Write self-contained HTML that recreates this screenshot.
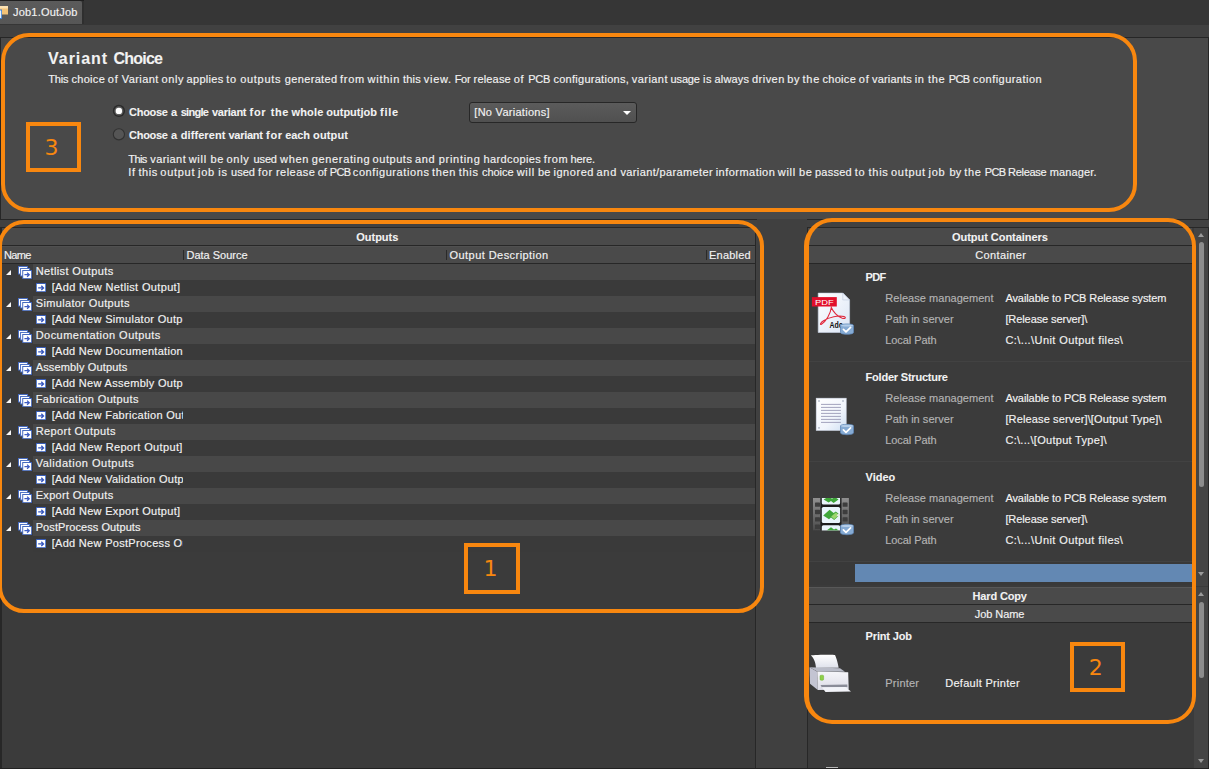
<!DOCTYPE html><html><head><meta charset="utf-8"><title>Job1.OutJob</title><style>
*{margin:0;padding:0;box-sizing:border-box}
html,body{width:1209px;height:769px;overflow:hidden;background:#414141}
body{position:relative;font-family:"Liberation Sans",sans-serif;font-size:11px;color:#f2f2f2}
.a{position:absolute}
.ln{position:absolute;left:0;top:0;width:0;height:0}
.t{position:absolute;white-space:pre;-webkit-text-stroke:.16px;line-height:13px;height:13px;letter-spacing:.3px}
.b{font-weight:bold;letter-spacing:0;-webkit-text-stroke:.08px}
.g{color:#b4b4b4}
.ob{position:absolute;border:4.7px solid #f8870f;border-radius:30px}
.row{position:absolute;left:33px;width:722px;height:16px}
.nb{font-family:"DejaVu Sans","Liberation Sans",sans-serif;font-size:22px;text-align:center}
.hl{position:absolute;height:1px;background:#272727}
</style></head><body>
<div class="a" style="left:0;top:0;width:1209px;height:25px;background:#363636"></div>
<div class="a" style="left:0;top:0;width:84px;height:1px;background:#1f1f1f"></div>
<div class="a" style="left:82px;top:1px;width:2px;height:23px;background:#2f2f2f"></div>
<div class="a" style="left:0;top:1px;width:82px;height:23px;background:linear-gradient(#5b5b5b,#565656);border-radius:0 2px 0 0"></div>
<svg class="a" style="left:0;top:5px" width="9" height="15" viewBox="0 0 9 15"><rect x="0" y="1" width="8" height="8.5" fill="#f3c377"/><rect x="0" y="1" width="8" height="2.5" fill="#fbe2b4"/><rect x="0" y="4.5" width="2" height="9.5" fill="#3f7fd0"/><rect x="0" y="5.5" width="1.2" height="7.5" fill="#e6f2ff"/></svg>
<div class="a" style="left:0;top:37px;width:1209px;height:183px;background:#494949;border:1px solid #262626"></div>
<svg class="a" style="left:111px;top:103px" width="16" height="40" viewBox="0 0 16 40"><circle cx="7.9" cy="7.9" r="6.1" fill="#2b2b2b"/><circle cx="7.9" cy="7.9" r="4.6" fill="#5e5e5e"/><circle cx="7.9" cy="7.9" r="3.2" fill="#fff"/><circle cx="7.9" cy="31.3" r="5.6" fill="#555" stroke="#313131" stroke-width="1.1"/></svg>
<div class="a" style="left:469px;top:102px;width:168px;height:21px;border:1px solid #272727;border-radius:3px;background:linear-gradient(#5b5b5b,#505050)"></div>
<div class="a" style="left:622.5px;top:110.5px;width:0;height:0;border-left:4.5px solid transparent;border-right:4.5px solid transparent;border-top:4.5px solid #fff"></div>
<div class="a" style="left:0;top:227px;width:756px;height:542px;background:#3b3b3b;border:1px solid #272727;border-left-width:2px"></div>
<div class="a" style="left:2px;top:228px;width:753px;height:17px;background:#4a4a4a"></div>
<div class="hl" style="left:2px;top:245px;width:753px"></div>
<div class="a" style="left:2px;top:246px;width:753px;height:17px;background:#4a4a4a;border-top:1px solid #505050"></div>
<div class="hl" style="left:2px;top:263px;width:753px"></div>
<div class="a" style="left:183px;top:250px;width:1px;height:10px;background:#2a2a2a"></div>
<div class="a" style="left:446px;top:250px;width:1px;height:10px;background:#2a2a2a"></div>
<div class="a" style="left:706px;top:250px;width:1px;height:10px;background:#2a2a2a"></div>
<div class="row" style="top:264px;background:#484848"></div>
<div class="row" style="top:280px;background:#3a3a3a"></div>
<div class="a" style="left:6px;top:270.0px;width:0;height:0;border-left:5.2px solid transparent;border-bottom:5.2px solid #f6f6f6"></div>
<svg class="a" style="left:18px;top:266px" width="14.2" height="13.2" viewBox="0 0 15 14"><rect x="0.5" y="0.5" width="9.6" height="8" fill="#fff" stroke="#456bc2"/><rect x="2.7" y="2.6" width="9.6" height="8" fill="#fff" stroke="#456bc2"/><rect x="5" y="4.8" width="9.5" height="8.7" fill="#fff" stroke="#3c62bb"/><path d="M6.8 9.2h5M9.6 7l2.3 2.2-2.3 2.2" fill="none" stroke="#3d5cc2" stroke-width="1.35"/></svg>
<svg class="a" style="left:36px;top:282.6px" width="10" height="9.4" viewBox="0 0 10 9.4"><rect x="0" y="0" width="10" height="9.4" fill="#fff"/><rect x="0.5" y="0.5" width="9" height="8.4" fill="none" stroke="#5a80d0" stroke-width="1"/><rect x="0" y="0" width="10" height="1" fill="#3a5db5"/><rect x="0" y="8.4" width="10" height="1" fill="#3a5db5"/><path d="M2.2 4.9h5.3M5.3 2.8l2.2 2.1-2.2 2.1" fill="none" stroke="#3556bf" stroke-width="1.35"/></svg>
<div class="row" style="top:296px;background:#484848"></div>
<div class="row" style="top:312px;background:#3a3a3a"></div>
<div class="a" style="left:6px;top:302.0px;width:0;height:0;border-left:5.2px solid transparent;border-bottom:5.2px solid #f6f6f6"></div>
<svg class="a" style="left:18px;top:298px" width="14.2" height="13.2" viewBox="0 0 15 14"><rect x="0.5" y="0.5" width="9.6" height="8" fill="#fff" stroke="#456bc2"/><rect x="2.7" y="2.6" width="9.6" height="8" fill="#fff" stroke="#456bc2"/><rect x="5" y="4.8" width="9.5" height="8.7" fill="#fff" stroke="#3c62bb"/><path d="M6.8 9.2h5M9.6 7l2.3 2.2-2.3 2.2" fill="none" stroke="#3d5cc2" stroke-width="1.35"/></svg>
<svg class="a" style="left:36px;top:314.6px" width="10" height="9.4" viewBox="0 0 10 9.4"><rect x="0" y="0" width="10" height="9.4" fill="#fff"/><rect x="0.5" y="0.5" width="9" height="8.4" fill="none" stroke="#5a80d0" stroke-width="1"/><rect x="0" y="0" width="10" height="1" fill="#3a5db5"/><rect x="0" y="8.4" width="10" height="1" fill="#3a5db5"/><path d="M2.2 4.9h5.3M5.3 2.8l2.2 2.1-2.2 2.1" fill="none" stroke="#3556bf" stroke-width="1.35"/></svg>
<div class="row" style="top:328px;background:#484848"></div>
<div class="row" style="top:344px;background:#3a3a3a"></div>
<div class="a" style="left:6px;top:334.0px;width:0;height:0;border-left:5.2px solid transparent;border-bottom:5.2px solid #f6f6f6"></div>
<svg class="a" style="left:18px;top:330px" width="14.2" height="13.2" viewBox="0 0 15 14"><rect x="0.5" y="0.5" width="9.6" height="8" fill="#fff" stroke="#456bc2"/><rect x="2.7" y="2.6" width="9.6" height="8" fill="#fff" stroke="#456bc2"/><rect x="5" y="4.8" width="9.5" height="8.7" fill="#fff" stroke="#3c62bb"/><path d="M6.8 9.2h5M9.6 7l2.3 2.2-2.3 2.2" fill="none" stroke="#3d5cc2" stroke-width="1.35"/></svg>
<svg class="a" style="left:36px;top:346.6px" width="10" height="9.4" viewBox="0 0 10 9.4"><rect x="0" y="0" width="10" height="9.4" fill="#fff"/><rect x="0.5" y="0.5" width="9" height="8.4" fill="none" stroke="#5a80d0" stroke-width="1"/><rect x="0" y="0" width="10" height="1" fill="#3a5db5"/><rect x="0" y="8.4" width="10" height="1" fill="#3a5db5"/><path d="M2.2 4.9h5.3M5.3 2.8l2.2 2.1-2.2 2.1" fill="none" stroke="#3556bf" stroke-width="1.35"/></svg>
<div class="row" style="top:360px;background:#484848"></div>
<div class="row" style="top:376px;background:#3a3a3a"></div>
<div class="a" style="left:6px;top:366.0px;width:0;height:0;border-left:5.2px solid transparent;border-bottom:5.2px solid #f6f6f6"></div>
<svg class="a" style="left:18px;top:362px" width="14.2" height="13.2" viewBox="0 0 15 14"><rect x="0.5" y="0.5" width="9.6" height="8" fill="#fff" stroke="#456bc2"/><rect x="2.7" y="2.6" width="9.6" height="8" fill="#fff" stroke="#456bc2"/><rect x="5" y="4.8" width="9.5" height="8.7" fill="#fff" stroke="#3c62bb"/><path d="M6.8 9.2h5M9.6 7l2.3 2.2-2.3 2.2" fill="none" stroke="#3d5cc2" stroke-width="1.35"/></svg>
<svg class="a" style="left:36px;top:378.6px" width="10" height="9.4" viewBox="0 0 10 9.4"><rect x="0" y="0" width="10" height="9.4" fill="#fff"/><rect x="0.5" y="0.5" width="9" height="8.4" fill="none" stroke="#5a80d0" stroke-width="1"/><rect x="0" y="0" width="10" height="1" fill="#3a5db5"/><rect x="0" y="8.4" width="10" height="1" fill="#3a5db5"/><path d="M2.2 4.9h5.3M5.3 2.8l2.2 2.1-2.2 2.1" fill="none" stroke="#3556bf" stroke-width="1.35"/></svg>
<div class="row" style="top:392px;background:#484848"></div>
<div class="row" style="top:408px;background:#3a3a3a"></div>
<div class="a" style="left:6px;top:398.0px;width:0;height:0;border-left:5.2px solid transparent;border-bottom:5.2px solid #f6f6f6"></div>
<svg class="a" style="left:18px;top:394px" width="14.2" height="13.2" viewBox="0 0 15 14"><rect x="0.5" y="0.5" width="9.6" height="8" fill="#fff" stroke="#456bc2"/><rect x="2.7" y="2.6" width="9.6" height="8" fill="#fff" stroke="#456bc2"/><rect x="5" y="4.8" width="9.5" height="8.7" fill="#fff" stroke="#3c62bb"/><path d="M6.8 9.2h5M9.6 7l2.3 2.2-2.3 2.2" fill="none" stroke="#3d5cc2" stroke-width="1.35"/></svg>
<svg class="a" style="left:36px;top:410.6px" width="10" height="9.4" viewBox="0 0 10 9.4"><rect x="0" y="0" width="10" height="9.4" fill="#fff"/><rect x="0.5" y="0.5" width="9" height="8.4" fill="none" stroke="#5a80d0" stroke-width="1"/><rect x="0" y="0" width="10" height="1" fill="#3a5db5"/><rect x="0" y="8.4" width="10" height="1" fill="#3a5db5"/><path d="M2.2 4.9h5.3M5.3 2.8l2.2 2.1-2.2 2.1" fill="none" stroke="#3556bf" stroke-width="1.35"/></svg>
<div class="row" style="top:424px;background:#484848"></div>
<div class="row" style="top:440px;background:#3a3a3a"></div>
<div class="a" style="left:6px;top:430.0px;width:0;height:0;border-left:5.2px solid transparent;border-bottom:5.2px solid #f6f6f6"></div>
<svg class="a" style="left:18px;top:426px" width="14.2" height="13.2" viewBox="0 0 15 14"><rect x="0.5" y="0.5" width="9.6" height="8" fill="#fff" stroke="#456bc2"/><rect x="2.7" y="2.6" width="9.6" height="8" fill="#fff" stroke="#456bc2"/><rect x="5" y="4.8" width="9.5" height="8.7" fill="#fff" stroke="#3c62bb"/><path d="M6.8 9.2h5M9.6 7l2.3 2.2-2.3 2.2" fill="none" stroke="#3d5cc2" stroke-width="1.35"/></svg>
<svg class="a" style="left:36px;top:442.6px" width="10" height="9.4" viewBox="0 0 10 9.4"><rect x="0" y="0" width="10" height="9.4" fill="#fff"/><rect x="0.5" y="0.5" width="9" height="8.4" fill="none" stroke="#5a80d0" stroke-width="1"/><rect x="0" y="0" width="10" height="1" fill="#3a5db5"/><rect x="0" y="8.4" width="10" height="1" fill="#3a5db5"/><path d="M2.2 4.9h5.3M5.3 2.8l2.2 2.1-2.2 2.1" fill="none" stroke="#3556bf" stroke-width="1.35"/></svg>
<div class="row" style="top:456px;background:#484848"></div>
<div class="row" style="top:472px;background:#3a3a3a"></div>
<div class="a" style="left:6px;top:462.0px;width:0;height:0;border-left:5.2px solid transparent;border-bottom:5.2px solid #f6f6f6"></div>
<svg class="a" style="left:18px;top:458px" width="14.2" height="13.2" viewBox="0 0 15 14"><rect x="0.5" y="0.5" width="9.6" height="8" fill="#fff" stroke="#456bc2"/><rect x="2.7" y="2.6" width="9.6" height="8" fill="#fff" stroke="#456bc2"/><rect x="5" y="4.8" width="9.5" height="8.7" fill="#fff" stroke="#3c62bb"/><path d="M6.8 9.2h5M9.6 7l2.3 2.2-2.3 2.2" fill="none" stroke="#3d5cc2" stroke-width="1.35"/></svg>
<svg class="a" style="left:36px;top:474.6px" width="10" height="9.4" viewBox="0 0 10 9.4"><rect x="0" y="0" width="10" height="9.4" fill="#fff"/><rect x="0.5" y="0.5" width="9" height="8.4" fill="none" stroke="#5a80d0" stroke-width="1"/><rect x="0" y="0" width="10" height="1" fill="#3a5db5"/><rect x="0" y="8.4" width="10" height="1" fill="#3a5db5"/><path d="M2.2 4.9h5.3M5.3 2.8l2.2 2.1-2.2 2.1" fill="none" stroke="#3556bf" stroke-width="1.35"/></svg>
<div class="row" style="top:488px;background:#484848"></div>
<div class="row" style="top:504px;background:#3a3a3a"></div>
<div class="a" style="left:6px;top:494.0px;width:0;height:0;border-left:5.2px solid transparent;border-bottom:5.2px solid #f6f6f6"></div>
<svg class="a" style="left:18px;top:490px" width="14.2" height="13.2" viewBox="0 0 15 14"><rect x="0.5" y="0.5" width="9.6" height="8" fill="#fff" stroke="#456bc2"/><rect x="2.7" y="2.6" width="9.6" height="8" fill="#fff" stroke="#456bc2"/><rect x="5" y="4.8" width="9.5" height="8.7" fill="#fff" stroke="#3c62bb"/><path d="M6.8 9.2h5M9.6 7l2.3 2.2-2.3 2.2" fill="none" stroke="#3d5cc2" stroke-width="1.35"/></svg>
<svg class="a" style="left:36px;top:506.6px" width="10" height="9.4" viewBox="0 0 10 9.4"><rect x="0" y="0" width="10" height="9.4" fill="#fff"/><rect x="0.5" y="0.5" width="9" height="8.4" fill="none" stroke="#5a80d0" stroke-width="1"/><rect x="0" y="0" width="10" height="1" fill="#3a5db5"/><rect x="0" y="8.4" width="10" height="1" fill="#3a5db5"/><path d="M2.2 4.9h5.3M5.3 2.8l2.2 2.1-2.2 2.1" fill="none" stroke="#3556bf" stroke-width="1.35"/></svg>
<div class="row" style="top:520px;background:#484848"></div>
<div class="row" style="top:536px;background:#3a3a3a"></div>
<div class="a" style="left:6px;top:526.0px;width:0;height:0;border-left:5.2px solid transparent;border-bottom:5.2px solid #f6f6f6"></div>
<svg class="a" style="left:18px;top:522px" width="14.2" height="13.2" viewBox="0 0 15 14"><rect x="0.5" y="0.5" width="9.6" height="8" fill="#fff" stroke="#456bc2"/><rect x="2.7" y="2.6" width="9.6" height="8" fill="#fff" stroke="#456bc2"/><rect x="5" y="4.8" width="9.5" height="8.7" fill="#fff" stroke="#3c62bb"/><path d="M6.8 9.2h5M9.6 7l2.3 2.2-2.3 2.2" fill="none" stroke="#3d5cc2" stroke-width="1.35"/></svg>
<svg class="a" style="left:36px;top:538.6px" width="10" height="9.4" viewBox="0 0 10 9.4"><rect x="0" y="0" width="10" height="9.4" fill="#fff"/><rect x="0.5" y="0.5" width="9" height="8.4" fill="none" stroke="#5a80d0" stroke-width="1"/><rect x="0" y="0" width="10" height="1" fill="#3a5db5"/><rect x="0" y="8.4" width="10" height="1" fill="#3a5db5"/><path d="M2.2 4.9h5.3M5.3 2.8l2.2 2.1-2.2 2.1" fill="none" stroke="#3556bf" stroke-width="1.35"/></svg>
<div class="a" style="left:757px;top:219px;width:50px;height:550px;background:#404040"></div>
<div class="a" style="left:807px;top:227px;width:402px;height:542px;background:#3b3b3b;border:1px solid #272727"></div>
<div class="a" style="left:808px;top:228px;width:384px;height:17px;background:#4a4a4a"></div>
<div class="a" style="left:808px;top:246px;width:384px;height:17px;background:#4a4a4a"></div>
<div class="a" style="left:808px;top:588px;width:384px;height:17px;background:#4a4a4a"></div>
<div class="a" style="left:808px;top:605px;width:384px;height:17px;background:#4a4a4a"></div>
<div class="hl" style="left:808px;top:245px;width:384px"></div>
<div class="hl" style="left:808px;top:263px;width:384px"></div>
<div class="hl" style="left:808px;top:604px;width:384px"></div>
<div class="hl" style="left:808px;top:622px;width:384px"></div>
<div class="hl" style="left:808px;top:587px;width:384px;background:#585858"></div>
<div class="hl" style="left:808px;top:361px;width:384px;background:#424242"></div>
<div class="hl" style="left:808px;top:461px;width:384px;background:#424242"></div>
<div class="hl" style="left:808px;top:561px;width:384px;background:#424242"></div>
<div class="a" style="left:826px;top:767px;width:12px;height:1px;background:#b8b8b8"></div>
<div class="a" style="left:808px;top:562px;width:384px;height:23px;background:#393939"></div>
<div class="a" style="left:855px;top:564px;width:337px;height:18px;background:#6388b3"></div>
<div class="a" style="left:1194px;top:228px;width:14px;height:358px;background:#444"></div>
<div class="a" style="left:1194px;top:587px;width:14px;height:181px;background:#444"></div>
<div class="a" style="left:1198.5px;top:242px;width:5px;height:245px;border-radius:3px;background:#8c8c8c"></div>
<div class="a" style="left:1198.5px;top:602px;width:5px;height:76px;border-radius:3px;background:#8c8c8c"></div>
<div class="a" style="left:1197.5px;top:233px;width:0;height:0;border-left:3.5px solid transparent;border-right:3.5px solid transparent;border-bottom:4px solid #9a9a9a"></div>
<div class="a" style="left:1197.5px;top:572px;width:0;height:0;border-left:3.5px solid transparent;border-right:3.5px solid transparent;border-top:4px solid #9a9a9a"></div>
<div class="a" style="left:1197.5px;top:592px;width:0;height:0;border-left:3.5px solid transparent;border-right:3.5px solid transparent;border-bottom:4px solid #9a9a9a"></div>
<div class="a" style="left:1197.5px;top:759px;width:0;height:0;border-left:3.5px solid transparent;border-right:3.5px solid transparent;border-top:4px solid #9a9a9a"></div>
<div class="hl" style="left:0;top:768px;width:1209px;background:#222"></div>
<div class="t" style="left:13.0px;top:6px;letter-spacing:0.211px;">Job1.OutJob</div>
<div class="ln"><span class="t b" style="left:48.0px;top:48.5px;font-size:16px;line-height:20px;height:20px;letter-spacing:0.973px;">Variant</span> <span class="t b" style="left:113.5px;top:48.5px;font-size:16px;line-height:20px;height:20px;letter-spacing:-0.769px;">Choice</span> </div>
<div class="ln"><span class="t" style="left:48.3px;top:73px;letter-spacing:-0.228px;">This</span> <span class="t" style="left:71.4px;top:73px;letter-spacing:0.318px;">choice</span> <span class="t" style="left:107.8px;top:73px;letter-spacing:0.715px;">of</span> <span class="t" style="left:121.7px;top:73px;letter-spacing:0.443px;">Variant</span> <span class="t" style="left:161.4px;top:73px;letter-spacing:0.670px;">only</span> <span class="t" style="left:186.6px;top:73px;letter-spacing:0.305px;">applies</span> <span class="t" style="left:226.3px;top:73px;letter-spacing:0.715px;">to</span> <span class="t" style="left:240.2px;top:73px;letter-spacing:0.715px;">outputs</span> <span class="t" style="left:284.8px;top:73px;letter-spacing:0.344px;">generated</span> <span class="t" style="left:340.1px;top:73px;letter-spacing:0.715px;">from</span> <span class="t" style="left:367.6px;top:73px;letter-spacing:0.715px;">within</span> <span class="t" style="left:403.0px;top:73px;letter-spacing:0.224px;">this</span> <span class="t" style="left:423.8px;top:73px;letter-spacing:0.715px;">view.</span> <span class="t" style="left:454.7px;top:73px;letter-spacing:-0.303px;">For</span> <span class="t" style="left:473.6px;top:73px;letter-spacing:0.169px;">release</span> <span class="t" style="left:513.7px;top:73px;letter-spacing:0.715px;">of</span> <span class="t" style="left:528.2px;top:73px;letter-spacing:-0.216px;">PCB</span> <span class="t" style="left:553.4px;top:73px;letter-spacing:0.275px;">configurations,</span> <span class="t" style="left:631.8px;top:73px;letter-spacing:0.446px;">variant</span> <span class="t" style="left:670.5px;top:73px;letter-spacing:-0.121px;">usage</span> <span class="t" style="left:703.0px;top:73px;letter-spacing:0.553px;">is</span> <span class="t" style="left:714.5px;top:73px;letter-spacing:0.172px;">always</span> <span class="t" style="left:752.0px;top:73px;letter-spacing:0.467px;">driven</span> <span class="t" style="left:787.3px;top:73px;letter-spacing:0.681px;">by</span> <span class="t" style="left:802.6px;top:73px;letter-spacing:0.715px;">the</span> <span class="t" style="left:822.4px;top:73px;letter-spacing:0.318px;">choice</span> <span class="t" style="left:858.8px;top:73px;letter-spacing:0.715px;">of</span> <span class="t" style="left:872.0px;top:73px;letter-spacing:0.168px;">variants</span> <span class="t" style="left:914.7px;top:73px;letter-spacing:0.715px;">in</span> <span class="t" style="left:928.0px;top:73px;letter-spacing:0.715px;">the</span> <span class="t" style="left:948.8px;top:73px;letter-spacing:-0.715px;">PCB</span> <span class="t" style="left:973.0px;top:73px;letter-spacing:0.467px;">configuration</span> </div>
<div class="ln"><span class="t b" style="left:129.1px;top:106px;letter-spacing:-0.309px;">Choose</span> <span class="t b" style="left:170.9px;top:106px;letter-spacing:0.675px;">a</span> <span class="t b" style="left:180.7px;top:106px;letter-spacing:-0.699px;">single</span> <span class="t b" style="left:212.0px;top:106px;letter-spacing:-0.263px;">variant</span> <span class="t b" style="left:249.5px;top:106px;letter-spacing:0.715px;">for</span> <span class="t b" style="left:270.7px;top:106px;letter-spacing:0.600px;">the</span> <span class="t b" style="left:291.4px;top:106px;letter-spacing:0.182px;">whole</span> <span class="t b" style="left:326.3px;top:106px;letter-spacing:-0.000px;">outputjob</span> <span class="t b" style="left:380.0px;top:106px;letter-spacing:0.715px;">file</span> </div>
<div class="ln"><span class="t b" style="left:129.1px;top:129px;letter-spacing:-0.309px;">Choose</span> <span class="t b" style="left:170.9px;top:129px;letter-spacing:0.675px;">a</span> <span class="t b" style="left:180.7px;top:129px;letter-spacing:0.088px;">different</span> <span class="t b" style="left:228.4px;top:129px;letter-spacing:-0.246px;">variant</span> <span class="t b" style="left:266.0px;top:129px;letter-spacing:0.715px;">for</span> <span class="t b" style="left:285.3px;top:129px;letter-spacing:-0.126px;">each</span> <span class="t b" style="left:313.0px;top:129px;letter-spacing:0.159px;">output</span> </div>
<div class="t" style="left:474.3px;top:106px;letter-spacing:0.277px;">[No Variations]</div>
<div class="ln"><span class="t" style="left:128.3px;top:153px;letter-spacing:-0.595px;">This</span> <span class="t" style="left:150.3px;top:153px;letter-spacing:0.396px;">variant</span> <span class="t" style="left:188.7px;top:153px;letter-spacing:0.715px;">will</span> <span class="t" style="left:210.4px;top:153px;letter-spacing:0.715px;">be</span> <span class="t" style="left:226.5px;top:153px;letter-spacing:0.715px;">only</span> <span class="t" style="left:253.5px;top:153px;letter-spacing:-0.121px;">used</span> <span class="t" style="left:280.0px;top:153px;letter-spacing:0.715px;">when</span> <span class="t" style="left:311.8px;top:153px;letter-spacing:0.644px;">generating</span> <span class="t" style="left:372.6px;top:153px;letter-spacing:0.535px;">outputs</span> <span class="t" style="left:414.9px;top:153px;letter-spacing:0.715px;">and</span> <span class="t" style="left:438.7px;top:153px;letter-spacing:0.715px;">printing</span> <span class="t" style="left:483.4px;top:153px;letter-spacing:0.397px;">hardcopies</span> <span class="t" style="left:543.8px;top:153px;letter-spacing:0.599px;">from</span> <span class="t" style="left:570.6px;top:153px;letter-spacing:-0.170px;">here.</span> </div>
<div class="ln"><span class="t" style="left:128.3px;top:166px;letter-spacing:0.715px;">If</span> <span class="t" style="left:138.4px;top:166px;letter-spacing:0.591px;">this</span> <span class="t" style="left:160.3px;top:166px;letter-spacing:0.715px;">output</span> <span class="t" style="left:198.0px;top:166px;letter-spacing:0.715px;">job</span> <span class="t" style="left:218.3px;top:166px;letter-spacing:0.715px;">is</span> <span class="t" style="left:231.0px;top:166px;letter-spacing:0.046px;">used</span> <span class="t" style="left:258.0px;top:166px;letter-spacing:0.715px;">for</span> <span class="t" style="left:276.0px;top:166px;letter-spacing:0.452px;">release</span> <span class="t" style="left:317.8px;top:166px;letter-spacing:-0.181px;">of</span> <span class="t" style="left:329.8px;top:166px;letter-spacing:-0.715px;">PCB</span> <span class="t" style="left:352.8px;top:166px;letter-spacing:0.586px;">configurations</span> <span class="t" style="left:431.9px;top:166px;letter-spacing:0.715px;">then</span> <span class="t" style="left:458.7px;top:166px;letter-spacing:0.715px;">this</span> <span class="t" style="left:481.9px;top:166px;letter-spacing:-0.002px;">choice</span> <span class="t" style="left:516.7px;top:166px;letter-spacing:0.715px;">will</span> <span class="t" style="left:537.9px;top:166px;letter-spacing:0.256px;">be</span> <span class="t" style="left:553.4px;top:166px;letter-spacing:0.567px;">ignored</span> <span class="t" style="left:596.5px;top:166px;letter-spacing:0.715px;">and</span> <span class="t" style="left:620.4px;top:166px;letter-spacing:0.380px;">variant/parameter</span> <span class="t" style="left:715.7px;top:166px;letter-spacing:0.468px;">information</span> <span class="t" style="left:777.8px;top:166px;letter-spacing:0.715px;">will</span> <span class="t" style="left:799.0px;top:166px;letter-spacing:0.715px;">be</span> <span class="t" style="left:815.0px;top:166px;letter-spacing:0.244px;">passed</span> <span class="t" style="left:854.7px;top:166px;letter-spacing:0.715px;">to</span> <span class="t" style="left:868.6px;top:166px;letter-spacing:0.715px;">this</span> <span class="t" style="left:891.0px;top:166px;letter-spacing:0.715px;">output</span> <span class="t" style="left:928.5px;top:166px;letter-spacing:0.715px;">job</span> <span class="t" style="left:949.4px;top:166px;letter-spacing:0.181px;">by</span> <span class="t" style="left:964.2px;top:166px;letter-spacing:0.715px;">the</span> <span class="t" style="left:984.8px;top:166px;letter-spacing:-0.715px;">PCB</span> <span class="t" style="left:1008.0px;top:166px;letter-spacing:-0.278px;">Release</span> <span class="t" style="left:1049.7px;top:166px;letter-spacing:0.133px;">manager.</span> </div>
<div class="t b" style="left:356.2px;top:231px;letter-spacing:0.005px;">Outputs</div>
<div class="t" style="left:4.0px;top:249px;letter-spacing:-0.649px;">Name</div>
<div class="t" style="left:186.5px;top:249px;letter-spacing:-0.015px;">Data Source</div>
<div class="t" style="left:449.5px;top:249px;letter-spacing:0.447px;">Output Description</div>
<div class="t" style="left:709.0px;top:249px;letter-spacing:0.219px;">Enabled</div>
<div class="t" style="left:35.7px;top:265px;letter-spacing:0.383px;">Netlist Outputs</div>
<div class="t" style="left:51.7px;top:281px;letter-spacing:0.345px;width:131.6px;overflow:hidden;">[Add New Netlist Output]</div>
<div class="t" style="left:35.7px;top:297px;letter-spacing:0.354px;">Simulator Outputs</div>
<div class="t" style="left:51.7px;top:313px;width:131.6px;overflow:hidden;">[Add New Simulator Output]</div>
<div class="t" style="left:35.7px;top:329px;letter-spacing:0.456px;">Documentation Outputs</div>
<div class="t" style="left:51.7px;top:345px;width:131.6px;overflow:hidden;">[Add New Documentation Output]</div>
<div class="t" style="left:35.7px;top:361px;letter-spacing:0.149px;">Assembly Outputs</div>
<div class="t" style="left:51.7px;top:377px;width:131.6px;overflow:hidden;">[Add New Assembly Output]</div>
<div class="t" style="left:35.7px;top:393px;letter-spacing:0.378px;">Fabrication Outputs</div>
<div class="t" style="left:51.7px;top:409px;width:131.6px;overflow:hidden;">[Add New Fabrication Output]</div>
<div class="t" style="left:35.7px;top:425px;letter-spacing:0.400px;">Report Outputs</div>
<div class="t" style="left:51.7px;top:441px;letter-spacing:0.355px;width:131.6px;overflow:hidden;">[Add New Report Output]</div>
<div class="t" style="left:35.7px;top:457px;letter-spacing:0.524px;">Validation Outputs</div>
<div class="t" style="left:51.7px;top:473px;width:131.6px;overflow:hidden;">[Add New Validation Output]</div>
<div class="t" style="left:35.7px;top:489px;letter-spacing:0.317px;">Export Outputs</div>
<div class="t" style="left:51.7px;top:505px;letter-spacing:0.306px;width:131.6px;overflow:hidden;">[Add New Export Output]</div>
<div class="t" style="left:35.7px;top:521px;letter-spacing:0.082px;">PostProcess Outputs</div>
<div class="t" style="left:51.7px;top:537px;width:131.6px;overflow:hidden;">[Add New PostProcess Output]</div>
<div class="t b" style="left:952.0px;top:231px;letter-spacing:-0.041px;">Output Containers</div>
<div class="t" style="left:975.3px;top:249px;letter-spacing:0.362px;">Container</div>
<div class="t b" style="left:865.6px;top:271px;letter-spacing:-0.700px;">PDF</div>
<div class="t g" style="left:885.3px;top:292px;letter-spacing:0.039px;">Release management</div>
<div class="t" style="left:1005.4px;top:292px;letter-spacing:-0.085px;">Available to PCB Release system</div>
<div class="t g" style="left:885.3px;top:313px;letter-spacing:0.032px;">Path in server</div>
<div class="t" style="left:1005.4px;top:313px;letter-spacing:-0.084px;">[Release server]\</div>
<div class="t g" style="left:885.3px;top:334px;letter-spacing:-0.087px;">Local Path</div>
<div class="t" style="left:1005.4px;top:334px;letter-spacing:0.413px;">C:\...\Unit Output files\</div>
<div class="t b" style="left:865.6px;top:371px;letter-spacing:-0.212px;">Folder Structure</div>
<div class="t g" style="left:885.3px;top:392px;letter-spacing:0.039px;">Release management</div>
<div class="t" style="left:1005.4px;top:392px;letter-spacing:-0.085px;">Available to PCB Release system</div>
<div class="t g" style="left:885.3px;top:413px;letter-spacing:0.032px;">Path in server</div>
<div class="t" style="left:1005.4px;top:413px;letter-spacing:0.135px;">[Release server]\[Output Type]\</div>
<div class="t g" style="left:885.3px;top:434px;letter-spacing:-0.087px;">Local Path</div>
<div class="t" style="left:1005.4px;top:434px;letter-spacing:0.301px;">C:\...\[Output Type]\</div>
<div class="t b" style="left:865.6px;top:471px;letter-spacing:-0.041px;">Video</div>
<div class="t g" style="left:885.3px;top:492px;letter-spacing:0.039px;">Release management</div>
<div class="t" style="left:1005.4px;top:492px;letter-spacing:-0.085px;">Available to PCB Release system</div>
<div class="t g" style="left:885.3px;top:513px;letter-spacing:0.032px;">Path in server</div>
<div class="t" style="left:1005.4px;top:513px;letter-spacing:-0.084px;">[Release server]\</div>
<div class="t g" style="left:885.3px;top:534px;letter-spacing:-0.087px;">Local Path</div>
<div class="t" style="left:1005.4px;top:534px;letter-spacing:0.413px;">C:\...\Unit Output files\</div>
<div class="t b" style="left:972.5px;top:590px;letter-spacing:-0.141px;">Hard Copy</div>
<div class="t" style="left:974.7px;top:608px;letter-spacing:-0.050px;">Job Name</div>
<div class="t b" style="left:865.6px;top:630px;letter-spacing:-0.159px;">Print Job</div>
<div class="t g" style="left:885.3px;top:677px;letter-spacing:0.217px;">Printer</div>
<div class="t" style="left:945.2px;top:677px;letter-spacing:0.299px;">Default Printer</div>

<svg class="a" style="left:806px;top:285px" width="60" height="60" viewBox="0 0 60 60"><defs><linearGradient id="pg" x1="0" y1="0" x2="1" y2="1"><stop offset="0" stop-color="#ffffff"/><stop offset="1" stop-color="#dbe5f5"/></linearGradient></defs><path d="M12.2 8.1H36.8L43.6 14.9V47.5H12.2Z" fill="url(#pg)" stroke="#c9d3e6" stroke-width=".6"/><path d="M36.8 8.1V14.9H43.6Z" fill="#eef3fb" stroke="#b9c4da" stroke-width=".6"/><rect x="5.9" y="12.1" width="24.9" height="9.4" fill="#e20f2b"/><text x="18.4" y="19.6" font-family="Liberation Sans,sans-serif" font-size="7.6" fill="#fff" text-anchor="middle" textLength="18.6" lengthAdjust="spacingAndGlyphs">PDF</text><path d="M25.3 22.5C24.5 29 20 36.5 15.5 39.2C13.6 40.2 14.2 37.8 17.5 35.8C23 32.3 32.5 30 38 31.6C40.6 32.6 39 34 36.3 33.2C31.5 31.6 27 26.6 25.3 22.5Z" fill="none" stroke="#e0283c" stroke-width="1.1"/><text x="23.6" y="42.6" font-family="Liberation Sans,sans-serif" font-weight="bold" font-size="8.8" fill="#111" textLength="13.5" lengthAdjust="spacingAndGlyphs">Ado</text><g transform="translate(34.1,38.0)"><path d="M0.4 2.4C0.4 0.5 13.4 0.5 13.4 2.4V9.4C13.4 11.9 0.4 11.9 0.4 9.4Z" fill="#86abd4" stroke="#6088b8" stroke-width="0.8"/><path d="M0.9 2.5C0.9 1 12.9 1 12.9 2.5C12.9 3.9 0.9 3.9 0.9 2.5Z" fill="#b4cde8"/><path d="M3.3 6.4l2.6 2.5 4.6-4.5" fill="none" stroke="#fff" stroke-width="1.7" stroke-linecap="round" stroke-linejoin="round"/></g></svg>
<svg class="a" style="left:806px;top:385px" width="60" height="60" viewBox="0 0 60 60"><defs><linearGradient id="fg" x1="0" y1="0" x2="1" y2="1"><stop offset="0" stop-color="#ffffff"/><stop offset=".6" stop-color="#f1f5fc"/><stop offset="1" stop-color="#cfe0f3"/></linearGradient></defs><rect x="10.2" y="13.2" width="30" height="32.2" fill="url(#fg)" stroke="#d5dcec" stroke-width=".6"/><rect x="15" y="18.9" width="19.9" height="0.9" fill="#9a9ab6"/><rect x="15" y="21.9" width="19.9" height="0.9" fill="#9a9ab6"/><rect x="15" y="24.9" width="19.9" height="0.9" fill="#9a9ab6"/><rect x="15" y="27.9" width="19.9" height="0.9" fill="#9a9ab6"/><rect x="15" y="30.9" width="19.9" height="0.9" fill="#9a9ab6"/><rect x="15" y="33.9" width="19.9" height="0.9" fill="#9a9ab6"/><rect x="15" y="36.9" width="19.9" height="0.9" fill="#9a9ab6"/><rect x="12.3" y="15.3" width="1.4" height="1.4" fill="#9aa3b8"/><rect x="36.3" y="15.3" width="1.4" height="1.4" fill="#9aa3b8"/><rect x="12.3" y="42.2" width="1.4" height="1.4" fill="#9aa3b8"/><g transform="translate(34.1,38.4)"><path d="M0.4 2.4C0.4 0.5 13.4 0.5 13.4 2.4V9.4C13.4 11.9 0.4 11.9 0.4 9.4Z" fill="#86abd4" stroke="#6088b8" stroke-width="0.8"/><path d="M0.9 2.5C0.9 1 12.9 1 12.9 2.5C12.9 3.9 0.9 3.9 0.9 2.5Z" fill="#b4cde8"/><path d="M3.3 6.4l2.6 2.5 4.6-4.5" fill="none" stroke="#fff" stroke-width="1.7" stroke-linecap="round" stroke-linejoin="round"/></g></svg>
<svg class="a" style="left:806px;top:485px" width="60" height="60" viewBox="0 0 60 60"><defs><linearGradient id="vg" x1="0" y1="0" x2="0" y2="1"><stop offset="0" stop-color="#909090"/><stop offset=".5" stop-color="#6e6e6e"/><stop offset="1" stop-color="#4a4a4a"/></linearGradient><clipPath id="vc"><rect x="7" y="12.9" width="36" height="32.7"/></clipPath></defs><g clip-path="url(#vc)"><rect x="7" y="12.9" width="35.9" height="32.7" fill="url(#vg)"/><rect x="14.4" y="12.9" width="21.1" height="32.7" fill="#1d1d1d"/><rect x="9.0" y="17.4" width="5" height="4.4" rx="0.6" fill="#3d3d3d"/><rect x="9.0" y="24.8" width="5" height="4.4" rx="0.6" fill="#3d3d3d"/><rect x="9.0" y="32.2" width="5" height="4.4" rx="0.6" fill="#3d3d3d"/><rect x="9.0" y="39.6" width="5" height="4.4" rx="0.6" fill="#3d3d3d"/><rect x="36.6" y="17.4" width="5" height="4.4" rx="0.6" fill="#3d3d3d"/><rect x="36.6" y="24.8" width="5" height="4.4" rx="0.6" fill="#3d3d3d"/><rect x="36.6" y="32.2" width="5" height="4.4" rx="0.6" fill="#3d3d3d"/><rect x="36.6" y="39.6" width="5" height="4.4" rx="0.6" fill="#3d3d3d"/><rect x="15.8" y="9" width="18.3" height="10.6" rx="1.6" fill="#e9f4fb"/><rect x="15.8" y="22" width="18.3" height="16" rx="1.6" fill="#e9f4fb"/><rect x="15.8" y="40.2" width="18.3" height="12" rx="1.6" fill="#e9f4fb"/><path d="M17.2 30.4l6.4-5.6 4 3.2 2.2-1.6 4 3.4-5.6 5.2-3.2-2.6-2 1.8z" fill="#3fa63a"/><path d="M25.2 31.6l4.6-4.2 3.2 2.6-4.8 4.2z" fill="#9bd66f"/><path d="M30.6 30.2l2-1.8 1.6 1.4-2 1.9z" fill="#e8e8e8"/><path d="M17.6 14.4l5.4-3 3 2.4 2.6-2 4 2.8-5 3.4-2.6-2-2.4 1.6z" fill="#3fa63a"/><path d="M20.6 45.6l4.4-3.4 3 2.2 2-1 3 2.4z" fill="#3fa63a"/></g><g transform="translate(34.1,38.4)"><path d="M0.4 2.4C0.4 0.5 13.4 0.5 13.4 2.4V9.4C13.4 11.9 0.4 11.9 0.4 9.4Z" fill="#86abd4" stroke="#6088b8" stroke-width="0.8"/><path d="M0.9 2.5C0.9 1 12.9 1 12.9 2.5C12.9 3.9 0.9 3.9 0.9 2.5Z" fill="#b4cde8"/><path d="M3.3 6.4l2.6 2.5 4.6-4.5" fill="none" stroke="#fff" stroke-width="1.7" stroke-linecap="round" stroke-linejoin="round"/></g></svg>
<svg class="a" style="left:800px;top:640px" width="70" height="70" viewBox="0 0 70 70"><defs><linearGradient id="pp" x1="0" y1="0" x2="0" y2="1"><stop offset="0" stop-color="#ffffff"/><stop offset="1" stop-color="#dfe2ec"/></linearGradient><linearGradient id="pf" x1="0" y1="0" x2="0" y2="1"><stop offset="0" stop-color="#f6f6fa"/><stop offset="1" stop-color="#dcdce6"/></linearGradient></defs><path d="M9.6 27.3L40 28.2L45 31.8L17.3 31.6Z" fill="#b9bcc8"/><path d="M10.9 15.6C13 15 33 14.6 35 15.1C36.5 18 38 24 38.7 27.8L16 27.8C15.6 23 14 18 10.9 15.6Z" fill="url(#pp)"/><path d="M9.6 27.3L17.3 31.8L17.8 50L10 43.7Z" fill="#c3c4d2"/><path d="M17.3 31.6L48.2 32.3L48.7 49.6L17.8 50Z" fill="url(#pf)"/><path d="M20.5 45L47.3 44.6L47.4 47L21.8 47.3Z" fill="#8a8c98"/><path d="M21.8 47.3L45.5 46.9L51 51.4L25.5 51.9Z" fill="#f2f3f8"/><rect x="20" y="35.2" width="3.6" height="5" rx="1" fill="#8fd04a" stroke="#6fb030" stroke-width=".5"/></svg>
<div class="ob" style="left:0.6px;top:32.9px;width:1136px;height:179.2px;border-radius:28px"></div>
<div class="ob" style="left:-2.1px;top:219.7px;width:765.8px;height:393px;border-radius:26px"></div>
<div class="ob" style="left:804.1px;top:218px;width:392px;height:505.8px;border-radius:28px;border-left-width:5.1px"></div>
<div class="a" style="left:25.6px;top:122.1px;width:55.0px;height:50.4px;border:4.3px solid #f8870f"></div>
<div class="a nb" style="left:24.1px;top:122.1px;width:55.0px;height:50.4px;line-height:51.4px;color:#f8870f">3</div>
<div class="a" style="left:464.2px;top:543.1px;width:55.8px;height:50.5px;border:4.3px solid #f8870f"></div>
<div class="a nb" style="left:462.7px;top:543.1px;width:55.8px;height:50.5px;line-height:51.5px;color:#f8870f">1</div>
<div class="a" style="left:1069.5px;top:642.3px;width:55.4px;height:50.2px;border:4.3px solid #f8870f"></div>
<div class="a nb" style="left:1068.0px;top:642.3px;width:55.4px;height:50.2px;line-height:51.2px;color:#f8870f">2</div>
</body></html>
